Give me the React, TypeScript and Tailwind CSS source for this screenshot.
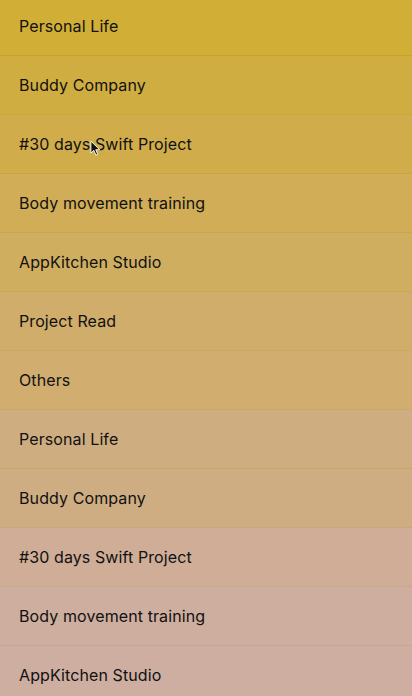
const rows = [
  { title: "Personal Life", bg: "bg-[#d1ae36]", line: "border-[#c8a426]" },
  { title: "Buddy Company", bg: "bg-[#d0ad40]", line: "border-[#cba838]" },
  { title: "#30 days Swift Project", bg: "bg-[#d0ad4a]", line: "border-[#c9a53c]" },
  { title: "Body movement training", bg: "bg-[#d0ad56]", line: "border-[#caa74d]" },
  { title: "AppKitchen Studio", bg: "bg-[#d0ae60]", line: "border-[#caa858]" },
  { title: "Project Read", bg: "bg-[#d0ad6a]", line: "border-[#cba862]" },
  { title: "Others", bg: "bg-[#d1ae70]", line: "border-[#cba86a]" },
  { title: "Personal Life", bg: "bg-[#ceae80]", line: "border-[#c9a661]" },
  { title: "Buddy Company", bg: "bg-[#cead82]", line: "border-[#c9a77c]" },
  { title: "#30 days Swift Project", bg: "bg-[#cfad96]", line: "border-[#c9a68e]" },
  { title: "Body movement training", bg: "bg-[#ceae9e]", line: "border-[#c8a697]" },
  { title: "AppKitchen Studio", bg: "bg-[#cdaea0]", line: "border-[#c7a699]" },
];

function Cursor() {
  return (
    <svg
      viewBox="0 0 12 18"
      className="absolute left-[90px] top-[140px] w-[11px] h-[17px]"
      aria-hidden
    >
      <path
        d="M1 1 L1 14 L4.2 11 L6.4 16.2 L8.4 15.3 L6.3 10.3 L10.6 10.3 Z"
        fill="#111"
        stroke="#fff"
        strokeWidth={1}
        strokeLinejoin="round"
      />
    </svg>
  );
}

export default function App() {
  return (
    <div
      className="relative w-[412px] h-[696px] overflow-hidden bg-[#cdaea0]"
      style={{ fontFamily: "Inter, 'Liberation Sans', sans-serif" }}
    >
      <ul className="-mt-[3px] flex flex-col">
        {rows.map((row, i) => (
          <li
            key={i}
            className={`h-[59px] flex items-center px-[19px] border-b ${row.bg} ${row.line}`}
          >
            <span className="text-[16px] text-[#111] tracking-[0.1px]">{row.title}</span>
          </li>
        ))}
      </ul>
      <Cursor />
    </div>
  );
}
